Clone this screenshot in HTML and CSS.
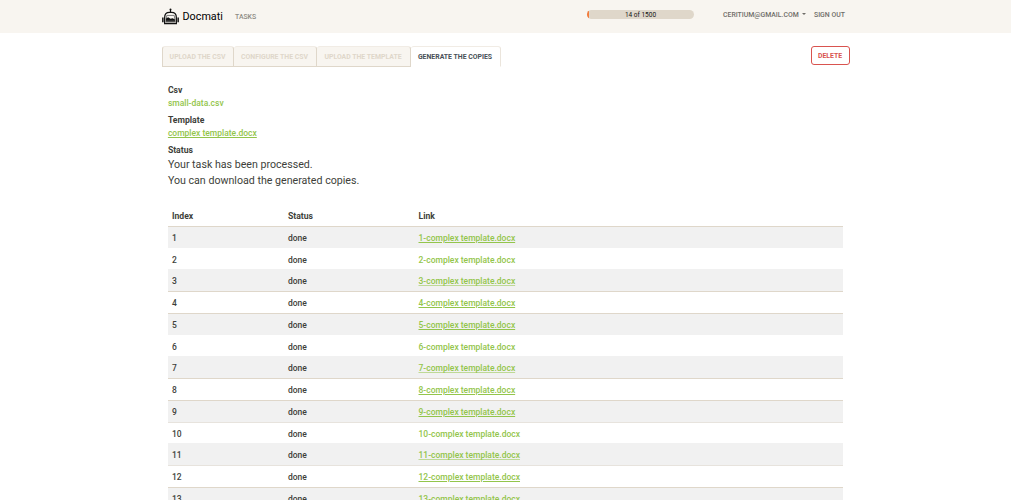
FILE: index.html
```html
<!DOCTYPE html>
<html lang="en">
<head>
    <meta charset="UTF-8">
    <meta name="viewport" content="width=device-width, initial-scale=1.0">
    <title>Docmati</title>
    <link rel="stylesheet" href="styles.css">
</head>
<body>

<header class="navbar">
    <div class="container navbar-inner">
        <a class="brand" href="#">
            <svg class="logo" viewBox="0 0 16 16">
                <path d="M8 1v3" stroke="#111" stroke-width="1.1"/>
                <path d="M.8 9v4.500M15.200 9v4.500" stroke="#111" stroke-width="1.400"/>
                <circle cx="8" cy="1.300" r=".9" fill="#111"/>
                <path d="M2.500 14.600V9Q2.500 4.200 7 4.200h2q4.500 0 4.500 4.800v5.600z" fill="#f8f5f0" stroke="#111" stroke-width="1.200"/>
                <path d="M4.500 7h7l.8 4.800H3.700z" fill="none" stroke="#555" stroke-width=".7"/>
                <path d="M3.800 12V9.800l2-1 2.200 1.400 2-.6 2.200 1.200V12z" fill="#111"/>
                <path d="M3.500 13h9" stroke="#111" stroke-width="1"/>
            </svg>
            <span>Docmati</span>
        </a>
        <a class="nav-link" href="#">Tasks</a>
        <div class="progress">
            <div class="progress-bar"></div>
            <span class="progress-text">14 of 1500</span>
        </div>
        <a class="nav-link user" href="#">ceritium@gmail.com<i class="caret"></i></a>
        <a class="nav-link sign-out" href="#">Sign out</a>
    </div>
</header>

<main class="container">
    <div class="toolbar">
        <nav class="tabs">
            <a class="tab tab-csv">Upload the CSV</a>
            <a class="tab tab-config">Configure the CSV</a>
            <a class="tab tab-template">Upload the template</a>
            <a class="tab tab-copies active">Generate the copies</a>
        </nav>
        <button class="btn-delete">Delete</button>
    </div>

    <section class="content">
        <dl class="details">
            <dt>Csv</dt>
            <dd><a class="plain" href="#">small-data.csv</a></dd>
            <dt>Template</dt>
            <dd><a href="#">complex template.docx</a></dd>
            <dt>Status</dt>
            <dd class="lead">Your task has been processed.<br>You can download the generated copies.</dd>
        </dl>

        <div class="table">
            <div class="row head"><span>Index</span><span>Status</span><span>Link</span></div>
            <div class="row line"><span>1</span><span>done</span><a href="#">1-complex template.docx</a></div>
            <div class="row"><span>2</span><span>done</span><a class="plain" href="#">2-complex template.docx</a></div>
            <div class="row"><span>3</span><span>done</span><a class="soft" href="#">3-complex template.docx</a></div>
            <div class="row line"><span>4</span><span>done</span><a href="#">4-complex template.docx</a></div>
            <div class="row line"><span>5</span><span>done</span><a href="#">5-complex template.docx</a></div>
            <div class="row"><span>6</span><span>done</span><a class="plain" href="#">6-complex template.docx</a></div>
            <div class="row"><span>7</span><span>done</span><a class="soft" href="#">7-complex template.docx</a></div>
            <div class="row line"><span>8</span><span>done</span><a href="#">8-complex template.docx</a></div>
            <div class="row line"><span>9</span><span>done</span><a href="#">9-complex template.docx</a></div>
            <div class="row line-soft"><span>10</span><span>done</span><a class="plain" href="#">10-complex template.docx</a></div>
            <div class="row"><span>11</span><span>done</span><a class="soft" href="#">11-complex template.docx</a></div>
            <div class="row line-soft"><span>12</span><span>done</span><a href="#">12-complex template.docx</a></div>
            <div class="row line"><span>13</span><span>done</span><a href="#">13-complex template.docx</a></div>
        </div>
    </section>
</main>

</body>
</html>
```

FILE: styles.css
```css
* {
    box-sizing: border-box;
}
body {
    margin: 0;
    height: 500px;
    overflow: hidden;
    background: #fff;
    color: #3e3f3a;
    font-family: Roboto, "Liberation Sans", sans-serif;
    font-size: 8.5px;
}
a {
    color: #93c54b;
}
.container {
    width: 688px;
    margin: 0 auto;
}

/* Navbar */
.navbar {
    height: 33px;
    background: #f8f5f0;
}
.navbar-inner {
    display: flex;
    align-items: center;
    height: 33px;
}
.brand {
    display: flex;
    align-items: center;
    width: 73.500px;
    color: #000;
    font-size: 10.8px;
    text-decoration: none;
}
.logo {
    width: 17px;
    height: 17px;
    margin-right: 4px;
}
.nav-link {
    color: #8e8c84;
    font-size: 6.9px;
    font-weight: 500;
    text-decoration: none;
    text-transform: uppercase;
    white-space: nowrap;
}
.progress {
    position: relative;
    width: 107px;
    height: 9px;
    margin: 0 29px 4px auto;
    border-radius: 5px;
    background: #dfd7ca;
    overflow: hidden;
}
.progress-bar {
    width: 2px;
    height: 9px;
    background: #f47c3c;
}
.progress-text {
    position: absolute;
    inset: 0;
    color: #111;
    font-size: 6.5px;
    line-height: 10px;
    text-align: center;
}
.user,
.sign-out {
    padding-bottom: 4px;
    color: #6f6d68;
}
.user {
    width: 91px;
}
.sign-out {
    width: 35.500px;
}
.caret {
    display: inline-block;
    margin-left: 3px;
    border: 2px solid transparent;
    border-top-color: #6f6d68;
    border-bottom: 0;
    vertical-align: 2px;
}

/* Steps */
.toolbar {
    display: flex;
    justify-content: space-between;
    padding-top: 13px;
}
.tabs {
    display: flex;
}
.tab {
    height: 21px;
    border: 1px solid #dfd7ca;
    border-top-color: #f1ece5;
    border-left-width: 0;
    border-radius: 3px 3px 0 0;
    background: #f8f5f0;
    color: #dfd7ca;
    font-size: 6.9px;
    font-weight: 700;
    line-height: 20px;
    text-align: center;
    text-transform: uppercase;
    white-space: nowrap;
}
.tab-csv {
    width: 72px;
    border-left-width: 1px;
}
.tab-config {
    width: 83px;
}
.tab-template {
    width: 94px;
}
.tab-copies {
    width: 90px;
}
.tab.active {
    background: #fff;
    color: #495057;
    border-right-color: #ebe5dc;
    border-bottom-color: #fff;
}
.btn-delete {
    width: 39px;
    height: 19px;
    padding: 0;
    border: 1px solid #d9534f;
    border-radius: 3px;
    background: #fff;
    color: #d9534f;
    font-family: inherit;
    font-size: 6.9px;
    font-weight: 700;
    line-height: 18px;
    text-transform: uppercase;
}

/* Task details */
.content {
    padding: 17px 7px 0 6px;
}
.details {
    margin: 0;
    padding-top: .4px;
    line-height: 13px;
    text-indent: .4px;
}
.details dt {
    font-size: 8.65px;
    font-weight: 700;
}
.details dd {
    margin: 0 0 4px;
    font-weight: 500;
}
.details .lead {
    padding-left: .4px;
    font-size: 10.650px;
    font-weight: 400;
    line-height: 16px;
    text-indent: 0;
}
.plain {
    text-decoration: none;
}
.soft {
    text-decoration-color: rgba(147, 197, 75, .55);
}

/* Generated copies */
.table {
    margin-top: 14.500px;
}
.row {
    display: grid;
    grid-template-columns: 116px 130.500px 1fr;
    align-items: center;
    height: 21.750px;
    padding: 1px 4px 0 4.500px;
    border-top: 1px solid transparent;
    font-weight: 500;
}
.row:nth-child(even) {
    background: #f1f1f1;
}
.row.line {
    border-top-color: #dfd7ca;
}
.row.line-soft {
    border-top-color: #e7e3dd;
}
.row.head {
    height: 22px;
    font-size: 8.65px;
    font-weight: 700;
}
```
